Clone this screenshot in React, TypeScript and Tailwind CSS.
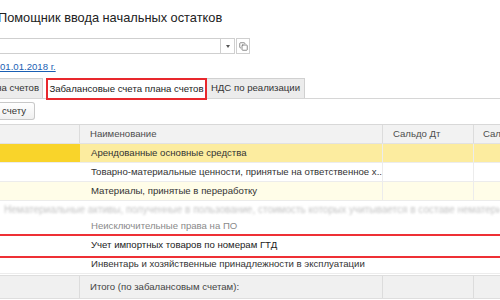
import { Copy } from "lucide-react";

const font = { fontFamily: '"Liberation Sans", Arial, sans-serif' };

type Row = {
  name: string;
  h: string;
  bg: string;
  first: string;
  text: string;
};

const rows: Row[] = [
  { name: "Арендованные основные средства", h: "h-[19px]", bg: "bg-[#fcec9f]", first: "bg-[#f9d42a]", text: "text-[#333]" },
  { name: "Товарно-материальные ценности, принятые на ответственное х...", h: "h-[19px]", bg: "bg-white", first: "bg-white", text: "text-[#333]" },
  { name: "Материалы, принятые в переработку", h: "h-[19px]", bg: "bg-[#fffde8]", first: "bg-[#fffde8]", text: "text-[#333]" },
];

function Cells({ row }: { row: Row }) {
  return (
    <div className={`flex ${row.h} border-b border-[#ececec] ${row.bg}`}>
      <div className={`w-[80px] shrink-0 ${row.first}`} />
      <div className={`w-[302px] shrink-0 flex items-center pl-[11px] whitespace-nowrap overflow-hidden ${row.text}`}>
        {row.name}
      </div>
      <div className="w-[91px] shrink-0 border-l border-[#ececec]" />
      <div className="flex-1 border-l border-[#ececec]" />
    </div>
  );
}

export default function App() {
  return (
    <div className="w-[500px] h-[300px] overflow-hidden bg-white text-[9.6px] text-[#333]" style={font}>
      {/* title */}
      <div className="h-[38px] pt-[9px] -ml-[2px] text-[12.8px] text-[#222] leading-[18px]">
        Помощник ввода начальных остатков
      </div>

      {/* selector */}
      <div className="flex h-[16px] w-[250px]">
        <div className="w-[222px] border border-[#cfcfcf] border-l-0" />
        <div className="w-[14px] border-y border-r border-[#cfcfcf] flex items-center justify-center">
          <span className="block w-0 h-0 border-x-[2px] border-x-transparent border-t-[3px] border-t-[#555]" />
        </div>
        <div className="w-[14px] ml-[1px] border border-[#cfcfcf] flex items-center justify-center">
          <Copy className="w-[9px] h-[9px] text-[#666]" strokeWidth={2} />
        </div>
      </div>

      {/* date link */}
      <div className="h-[24px] pt-[7px] leading-[12px]">
        <span className="text-[#1a5fb4] underline">01.01.2018 г.</span>
      </div>

      {/* tabs */}
      <div className="flex h-[21px] border-b border-[#d6d6d6]">
        <div className="w-[43px] bg-[#ececec] border border-l-0 border-b-0 border-[#d0d0d0] flex items-center justify-end pr-[3px] whitespace-nowrap overflow-hidden">
          на счетов
        </div>
        <div className="ml-[3px] w-[161px] h-[22px] bg-white border-2 border-[#e8282d] flex items-center justify-center whitespace-nowrap text-[#222]">
          Забалансовые счета плана счетов
        </div>
        <div className="w-[98px] bg-[#ececec] border border-l-0 border-b-0 border-[#d0d0d0] flex items-center justify-center whitespace-nowrap">
          НДС по реализации
        </div>
      </div>

      {/* button */}
      <div className="pt-[3px] h-[25px]">
        <div className="w-[35px] h-[18px] border border-l-0 border-[#c8c8c8] rounded-r-[3px] bg-gradient-to-b from-white to-[#f0f0f0] flex items-center pl-[2px]">
          счету
        </div>
      </div>

      {/* table */}
      <div className="border-t border-[#d8d8d8]">
        <div className="flex h-[19px] bg-[#f2f2f2] border-b border-[#e2e2e2] text-[#4d4d4d]">
          <div className="w-[80px] shrink-0 border-r border-[#dcdcdc]" />
          <div className="w-[302px] shrink-0 flex items-center pl-[10px]">Наименование</div>
          <div className="w-[91px] shrink-0 border-l border-[#dcdcdc] flex items-center pl-[10px]">Сальдо Дт</div>
          <div className="flex-1 border-l border-[#dcdcdc] flex items-center pl-[9px] whitespace-nowrap overflow-hidden">Сальдо Кт</div>
        </div>

        {rows.map((r) => (
          <Cells key={r.name} row={r} />
        ))}

        {/* blurred scrolling row */}
        <div className="h-[16px] flex items-center overflow-hidden whitespace-nowrap text-[#c4c4c4] blur-[1.3px] pl-[4px] text-[10px]">
          Нематериальные активы, полученные в пользование, стоимость которых учитывается в составе нематериальных активов организации и прочее
        </div>

        <div className="h-[19px] flex items-center pl-[91px] text-[#8a8a8a] border-b border-[#ececec]">
          Неисключительные права на ПО
        </div>

        <div className="relative h-[19px] flex items-center pl-[91px] text-[#222]">
          Учет импортных товаров по номерам ГТД
          <div className="absolute left-[-2px] right-[-2px] top-[-2px] bottom-[-3px] border-2 border-[#ee3035]" />
        </div>

        <div className="h-[18px] mt-[1px] flex items-center pl-[91px] text-[#333] border-b border-[#ececec]">
          Инвентарь и хозяйственные принадлежности в эксплуатации
        </div>

        <div className="flex h-[24px] mt-[1px] bg-[#f0f0f0] border-y border-[#dedede] text-[#444]">
          <div className="w-[80px] shrink-0 border-r border-[#dcdcdc]" />
          <div className="w-[302px] shrink-0 flex items-center pl-[10px]">Итого (по забалансовым счетам):</div>
          <div className="w-[91px] shrink-0 border-l border-[#dcdcdc]" />
          <div className="flex-1 border-l border-[#dcdcdc]" />
        </div>
      </div>
    </div>
  );
}
